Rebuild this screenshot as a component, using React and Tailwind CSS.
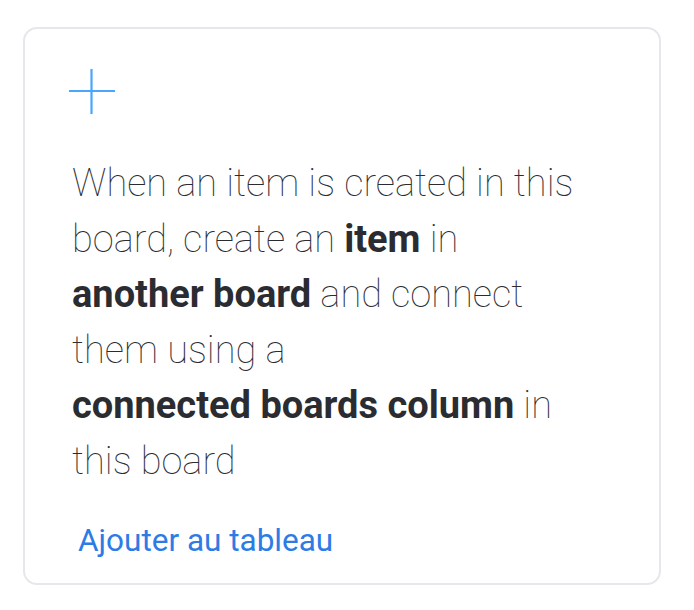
function PlusIcon() {
  return (
    <svg width="48" height="48" viewBox="0 0 48 48" fill="none" className="text-[#4aa6fb]">
      <path d="M23.5 1v45M1 23h46" stroke="currentColor" strokeWidth="2.2" />
    </svg>
  );
}

export default function App() {
  return (
    <div className="min-h-[610px] bg-white pl-[23px] pt-[27px] font-[Roboto,'Liberation_Sans',sans-serif]">
      <div className="flex h-[558px] w-[638px] flex-col rounded-[14px] border-2 border-[#e6e7eb] bg-white pl-[43px] pt-[39px]">
        <PlusIcon />
        <p className="mt-[40px] w-[520px] pl-[4px] text-[38px] font-thin leading-[55.6px] text-[#2b2c31]">
          When an item is created in this board, create an <span className="font-bold">item</span> in{" "}
          <span className="whitespace-nowrap font-bold">another board</span> and connect them using a{" "}
          <span className="whitespace-nowrap font-bold">connected boards column</span> in this board
        </p>
        <div className="mt-auto mb-[22px] pl-[10px]">
          <button type="button" className="text-[31.5px] leading-[40px] text-[#2d7be5]">
            Ajouter au tableau
          </button>
        </div>
      </div>
    </div>
  );
}
